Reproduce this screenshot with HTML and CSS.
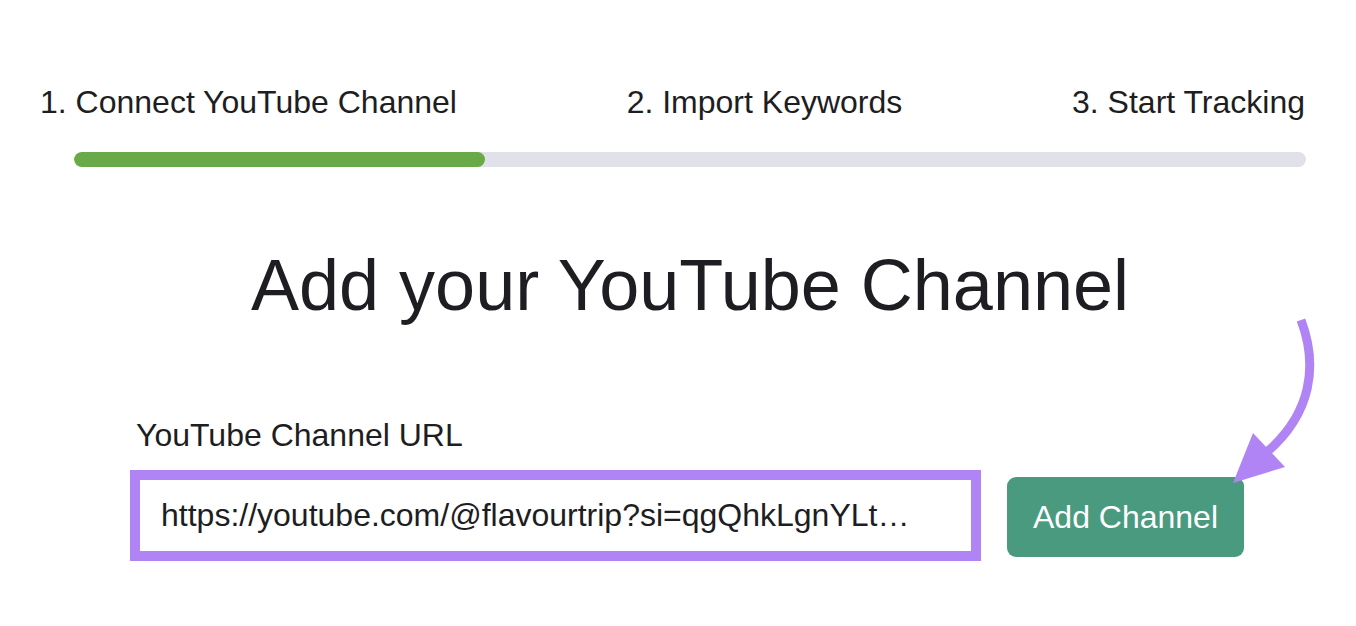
FILE: index.html
```html
<!DOCTYPE html>
<html>
<head>
	<meta charset='utf-8'/>
	<title>Add your YouTube Channel</title>
	<link rel="stylesheet" href="styles.css">
</head>
<body>

	<div id="steps">
		<div class="step">1. Connect YouTube Channel</div>
		<div class="step">2. Import Keywords</div>
		<div class="step">3. Start Tracking</div>
	</div>

	<div id="progress">
		<div id="progress_fill"></div>
	</div>

	<h1 id="title">Add your YouTube Channel</h1>

	<div id="channel_form">
		<label for="channel_url">YouTube Channel URL</label>
		<div class="row">
			<input type="text" id="channel_url" value="https://youtube.com/@flavourtrip?si=qgQhkLgnYLt…"/>
			<button id="add_channel">Add Channel</button>
		</div>
	</div>

	<svg id="arrow" width="110" height="190" viewBox="0 0 110 190">
		<path d="M81 10 C98 55, 92 103, 47 142" fill="none" stroke="#b084f4" stroke-width="9"/>
		<polygon points="13,173 33,123 65,157" fill="#b084f4"/>
	</svg>

</body>
</html>
```

FILE: styles.css
```css
*{
	margin:0;padding:0;
	box-sizing:border-box;
}
body{
	position:relative;
	background:#fff;
	color:#1d1d22;
	font-family:"Liberation Sans", Arial, sans-serif;
}

#steps{
	display:flex;
	justify-content:space-between;
	padding:84px 51px 0 40px;
	font-size:32px;
	line-height:37px;
}

#progress{
	margin:31px 50px 0 74px;
	height:15px;
	border-radius:8px;
	background:#e1e1e9;
	overflow:hidden;
}
#progress_fill{
	width:411px;
	height:100%;
	border-radius:8px;
	background:#69aa48;
}

#title{
	margin:76px 50px 0 74px;
	text-align:center;
	font-size:72px;
	font-weight:normal;
	line-height:85px;
}

#channel_form{
	margin-top:89px;
	padding-left:130px;
}
#channel_form label{
	display:block;
	margin-left:6px;
	font-size:32px;
	line-height:37px;
}
#channel_form .row{
	display:flex;
	align-items:flex-start;
	gap:26px;
	margin-top:16px;
}
#channel_url{
	width:851px;
	height:91px;
	padding:0 21px;
	border:10px solid #b084f4;
	outline:none;
	font-family:inherit;
	font-size:32px;
	color:#1d1d22;
	text-overflow:ellipsis;
	white-space:nowrap;
	overflow:hidden;
}
#add_channel{
	width:237px;
	height:80px;
	margin-top:7px;
	border:none;
	border-radius:9px;
	background:#4a9a80;
	color:#fff;
	font-family:inherit;
	font-size:32px;
	cursor:pointer;
}

#arrow{
	position:absolute;
	left:1220px;
	top:310px;
}
```
